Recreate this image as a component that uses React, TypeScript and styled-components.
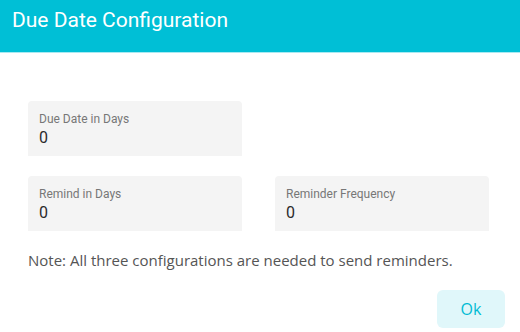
import React from "react";
import styled, { createGlobalStyle } from "styled-components";

const Global = createGlobalStyle`
  html, body {
    margin: 0;
    padding: 0;
    background: #ffffff;
  }
`;

const Dialog = styled.div`
  width: 520px;
  height: 332px;
  background: #ffffff;
  display: flex;
  flex-direction: column;
`;

const Header = styled.div`
  height: 53px;
  background: #00bfd6;
  border-bottom: 1px solid #a9e9f1;
  box-sizing: border-box;
  padding: 8px 12px 0;
  font-family: Roboto, "Liberation Sans", sans-serif;
  font-size: 21px;
  color: #ffffff;
  line-height: 24px;
`;

const Body = styled.div`
  flex: 1;
  padding: 48px 31px 0 28px;
  display: flex;
  flex-direction: column;
`;

const FieldGrid = styled.div`
  display: grid;
  grid-template-columns: 214px 214px;
  column-gap: 33px;
  row-gap: 20px;
`;

const Field = styled.div<{ $col?: number }>`
  grid-column: ${(p) => p.$col ?? "auto"};
  height: 55px;
  background: #f4f4f4;
  border-radius: 4px 4px 0 0;
  box-sizing: border-box;
  padding: 10px 0 0 11px;
  font-family: Roboto, "Liberation Sans", sans-serif;
`;

const Label = styled.div`
  font-size: 12px;
  color: #777777;
  line-height: 16px;
`;

const Value = styled.div`
  font-size: 16px;
  color: #2b2b2b;
  line-height: 20px;
  margin-top: 1px;
`;

const Note = styled.p`
  margin: 19px 0 0;
  font-family: "Open Sans", "Liberation Sans", sans-serif;
  font-size: 15px;
  color: #555555;
  line-height: 20px;
`;

const Actions = styled.div`
  display: flex;
  justify-content: flex-end;
  margin-top: 20px;
  margin-right: -16px;
`;

const OkButton = styled.button`
  width: 68px;
  height: 38px;
  border: none;
  border-radius: 6px;
  background: #e0f7fa;
  color: #00bcd4;
  font-family: "Open Sans", "Liberation Sans", sans-serif;
  font-size: 16px;
  cursor: pointer;
`;

export default function App() {
  return (
    <>
      <Global />
      <Dialog>
        <Header>Due Date Configuration</Header>
        <Body>
          <FieldGrid>
            <Field $col={1}>
              <Label>Due Date in Days</Label>
              <Value>0</Value>
            </Field>
            <Field $col={1}>
              <Label>Remind in Days</Label>
              <Value>0</Value>
            </Field>
            <Field $col={2}>
              <Label>Reminder Frequency</Label>
              <Value>0</Value>
            </Field>
          </FieldGrid>
          <Note>Note: All three configurations are needed to send reminders.</Note>
          <Actions>
            <OkButton>Ok</OkButton>
          </Actions>
        </Body>
      </Dialog>
    </>
  );
}
